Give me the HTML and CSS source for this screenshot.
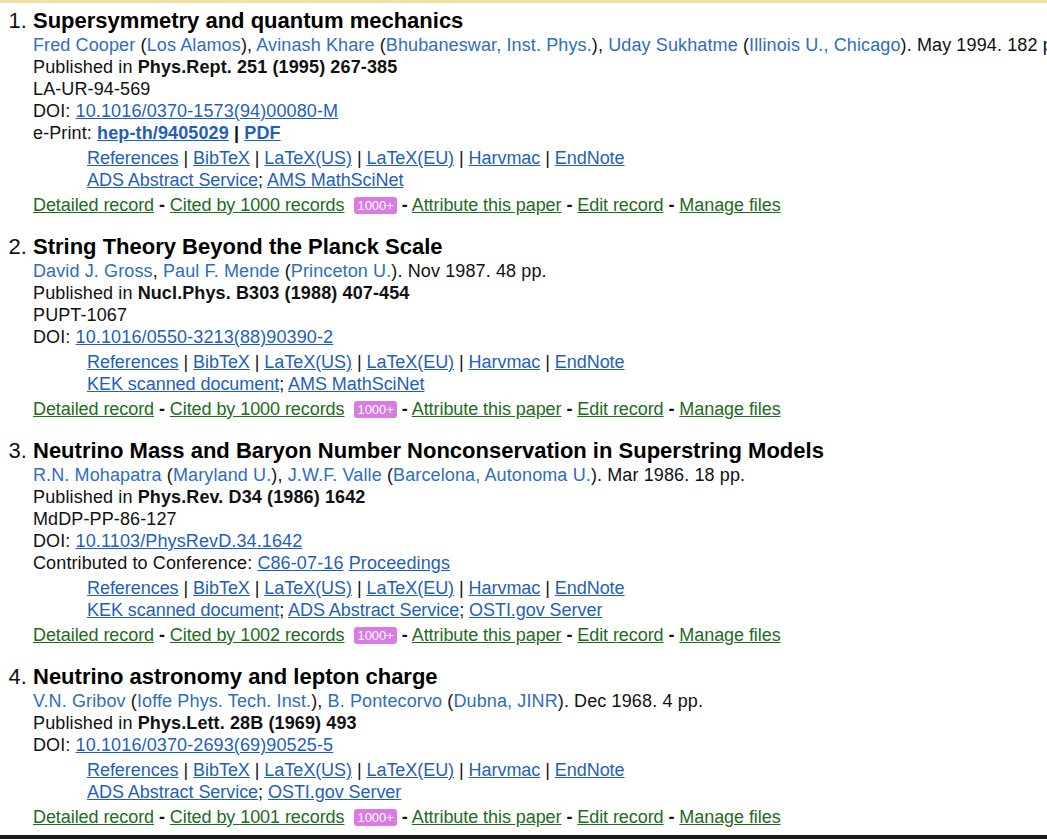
FILE: index.html
```html
<!DOCTYPE html>
<html lang="en">
<head>
    <meta charset="UTF-8">
    <meta name="viewport" content="width=device-width, initial-scale=1.0">
    <title>Search results</title>
    <link rel="stylesheet" href="styles.css">
</head>
<body>
    <div class="topline"></div>
    <ol class="records">
        <li>
            <div class="title">Supersymmetry and quantum mechanics</div>
            <div class="line authors"><a href="#">Fred Cooper</a> (<a href="#">Los Alamos</a>), <a href="#">Avinash Khare</a> (<a href="#">Bhubaneswar, Inst. Phys.</a>), <a href="#">Uday Sukhatme</a> (<a href="#">Illinois U., Chicago</a>). May 1994. 182 pp.</div>
            <div class="line">Published in <b>Phys.Rept. 251 (1995) 267-385</b></div>
            <div class="line">LA-UR-94-569</div>
            <div class="line">DOI: <a class="u" href="#">10.1016/0370-1573(94)00080-M</a></div>
            <div class="line">e-Print: <b><a class="u" href="#">hep-th/9405029</a> | <a class="u" href="#">PDF</a></b></div>
            <div class="links">
                <div class="line"><a class="u" href="#">References</a> | <a class="u" href="#">BibTeX</a> | <a class="u" href="#">LaTeX(US)</a> | <a class="u" href="#">LaTeX(EU)</a> | <a class="u" href="#">Harvmac</a> | <a class="u" href="#">EndNote</a></div>
                <div class="line"><a class="u" href="#">ADS Abstract Service</a>; <a class="u" href="#">AMS MathSciNet</a></div>
            </div>
            <div class="line actions"><a href="#">Detailed record</a> <b>-</b> <a href="#">Cited by 1000 records</a> <span class="badge">1000+</span> <b>-</b> <a href="#">Attribute this paper</a> <b>-</b> <a href="#">Edit record</a> <b>-</b> <a href="#">Manage files</a></div>
        </li>
        <li>
            <div class="title">String Theory Beyond the Planck Scale</div>
            <div class="line authors"><a href="#">David J. Gross</a>, <a href="#">Paul F. Mende</a> (<a href="#">Princeton U.</a>). Nov 1987. 48 pp.</div>
            <div class="line">Published in <b>Nucl.Phys. B303 (1988) 407-454</b></div>
            <div class="line">PUPT-1067</div>
            <div class="line">DOI: <a class="u" href="#">10.1016/0550-3213(88)90390-2</a></div>
            <div class="links">
                <div class="line"><a class="u" href="#">References</a> | <a class="u" href="#">BibTeX</a> | <a class="u" href="#">LaTeX(US)</a> | <a class="u" href="#">LaTeX(EU)</a> | <a class="u" href="#">Harvmac</a> | <a class="u" href="#">EndNote</a></div>
                <div class="line"><a class="u" href="#">KEK scanned document</a>; <a class="u" href="#">AMS MathSciNet</a></div>
            </div>
            <div class="line actions"><a href="#">Detailed record</a> <b>-</b> <a href="#">Cited by 1000 records</a> <span class="badge">1000+</span> <b>-</b> <a href="#">Attribute this paper</a> <b>-</b> <a href="#">Edit record</a> <b>-</b> <a href="#">Manage files</a></div>
        </li>
        <li>
            <div class="title">Neutrino Mass and Baryon Number Nonconservation in Superstring Models</div>
            <div class="line authors"><a href="#">R.N. Mohapatra</a> (<a href="#">Maryland U.</a>), <a href="#">J.W.F. Valle</a> (<a href="#">Barcelona, Autonoma U.</a>). Mar 1986. 18 pp.</div>
            <div class="line">Published in <b>Phys.Rev. D34 (1986) 1642</b></div>
            <div class="line">MdDP-PP-86-127</div>
            <div class="line">DOI: <a class="u" href="#">10.1103/PhysRevD.34.1642</a></div>
            <div class="line">Contributed to Conference: <a class="u" href="#">C86-07-16</a> <a class="u" href="#">Proceedings</a></div>
            <div class="links">
                <div class="line"><a class="u" href="#">References</a> | <a class="u" href="#">BibTeX</a> | <a class="u" href="#">LaTeX(US)</a> | <a class="u" href="#">LaTeX(EU)</a> | <a class="u" href="#">Harvmac</a> | <a class="u" href="#">EndNote</a></div>
                <div class="line"><a class="u" href="#">KEK scanned document</a>; <a class="u" href="#">ADS Abstract Service</a>; <a class="u" href="#">OSTI.gov Server</a></div>
            </div>
            <div class="line actions"><a href="#">Detailed record</a> <b>-</b> <a href="#">Cited by 1002 records</a> <span class="badge">1000+</span> <b>-</b> <a href="#">Attribute this paper</a> <b>-</b> <a href="#">Edit record</a> <b>-</b> <a href="#">Manage files</a></div>
        </li>
        <li>
            <div class="title">Neutrino astronomy and lepton charge</div>
            <div class="line authors"><a href="#">V.N. Gribov</a> (<a href="#">Ioffe Phys. Tech. Inst.</a>), <a href="#">B. Pontecorvo</a> (<a href="#">Dubna, JINR</a>). Dec 1968. 4 pp.</div>
            <div class="line">Published in <b>Phys.Lett. 28B (1969) 493</b></div>
            <div class="line">DOI: <a class="u" href="#">10.1016/0370-2693(69)90525-5</a></div>
            <div class="links">
                <div class="line"><a class="u" href="#">References</a> | <a class="u" href="#">BibTeX</a> | <a class="u" href="#">LaTeX(US)</a> | <a class="u" href="#">LaTeX(EU)</a> | <a class="u" href="#">Harvmac</a> | <a class="u" href="#">EndNote</a></div>
                <div class="line"><a class="u" href="#">ADS Abstract Service</a>; <a class="u" href="#">OSTI.gov Server</a></div>
            </div>
            <div class="line actions"><a href="#">Detailed record</a> <b>-</b> <a href="#">Cited by 1001 records</a> <span class="badge">1000+</span> <b>-</b> <a href="#">Attribute this paper</a> <b>-</b> <a href="#">Edit record</a> <b>-</b> <a href="#">Manage files</a></div>
        </li>
    </ol>
    <div class="bottombar"></div>
</body>
</html>
```

FILE: styles.css
```css
html{
    overflow: hidden;
}
body{
    margin: 0;
    font-family: "Liberation Sans", Arial, sans-serif;
    color: #111;
    background: #fff;
}
.topline{
    height: 3px;
    background: #efe1a6;
}
.records{
    margin: 4px 0 0;
    padding-left: 33px;
    font-size: 22px;
}
.records li{
    margin-bottom: 17px;
}
.title{
    font-weight: bold;
    line-height: 27px;
    color: #000;
}
.line{
    font-size: 18px;
    line-height: 22px;
    white-space: nowrap;
    letter-spacing: 0.12px;
}
.authors a{
    color: #2f6dbf;
    text-decoration: none;
}
a.u{
    color: #1f5fbb;
    text-decoration: underline;
}
.links{
    margin-top: 3px;
    padding-left: 54px;
}
.links .line{
    letter-spacing: -0.05px;
}
.actions{
    margin-top: 3px;
    letter-spacing: -0.07px;
}
.actions a{
    color: #236a23;
    text-decoration: underline;
}
.badge{
    display: inline-block;
    font-size: 13px;
    line-height: 17px;
    letter-spacing: 0;
    padding: 0 3px;
    margin-left: 5px;
    color: #fff;
    background: #d97be3;
    border-radius: 3px;
    vertical-align: 1px;
}
.bottombar{
    position: fixed;
    left: 0;
    right: 0;
    bottom: 0;
    height: 4px;
    background: #1c1c1c;
}
```
